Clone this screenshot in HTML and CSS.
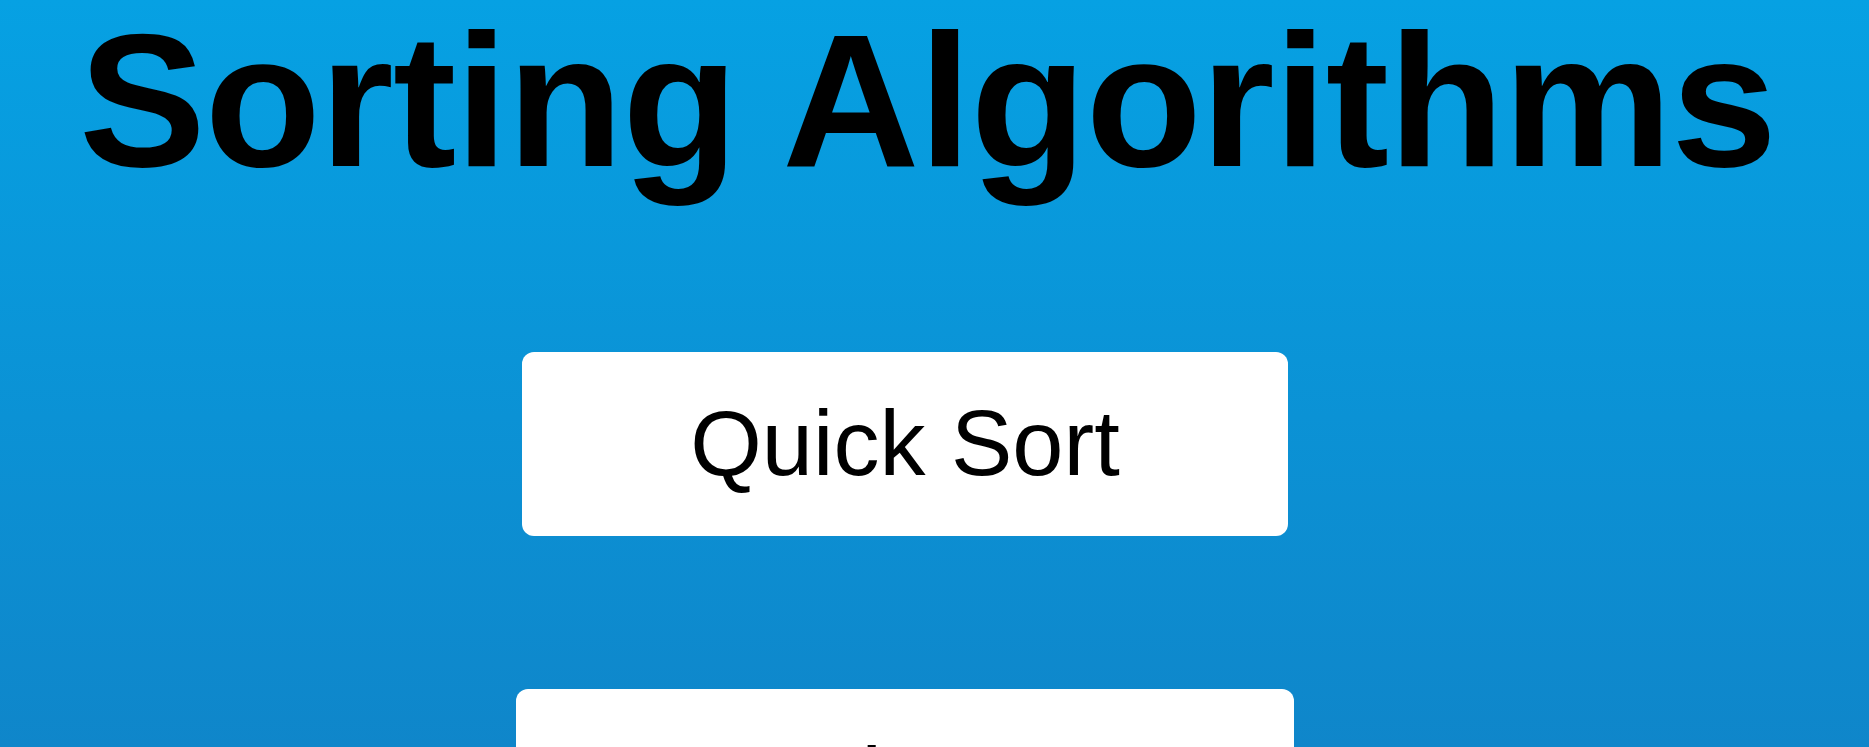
FILE: index.html
```html
<!DOCTYPE html>
<html lang="en">
<head>
<meta charset="utf-8">
<title>Sorting Algorithms</title>
<link rel="stylesheet" href="styles.css">
</head>
<body>
  <header class="header">
    <h1 class="title">Sorting Algorithms</h1>
  </header>
  <nav class="menu">
    <button class="menu-btn menu-btn--quick" type="button">Quick Sort</button>
    <button class="menu-btn menu-btn--insertion" type="button">Insertion Sort</button>
  </nav>
</body>
</html>
```

FILE: styles.css
```css
html {
  background: linear-gradient(to bottom, #06a1e3 0px, #0f86ca 747px);
  background-repeat: no-repeat;
  background-color: #0f86ca;
}

body {
  margin: 0;
  font-family: "Liberation Sans", Arial, sans-serif;
  color: #000;
}

.header {
  display: flex;
  justify-content: center;
  padding-right: 14px;
}

.title {
  margin: -9px 0 0 0;
  font-size: 190px;
  line-height: 1.15;
  font-weight: 700;
  letter-spacing: -0.9px;
}

.menu {
  display: flex;
  flex-direction: column;
  align-items: center;
  gap: 153px;
  padding-top: 142px;
  padding-right: 59px;
}

.menu-btn {
  display: flex;
  align-items: center;
  justify-content: center;
  height: 184px;
  padding: 0;
  border: none;
  border-radius: 12px;
  background: #fff;
  color: #000;
  font-family: "Liberation Sans", Arial, sans-serif;
  font-size: 92px;
  font-weight: 400;
  cursor: pointer;
}

.menu-btn--quick {
  width: 766px;
}

.menu-btn--insertion {
  width: 778px;
}
```
